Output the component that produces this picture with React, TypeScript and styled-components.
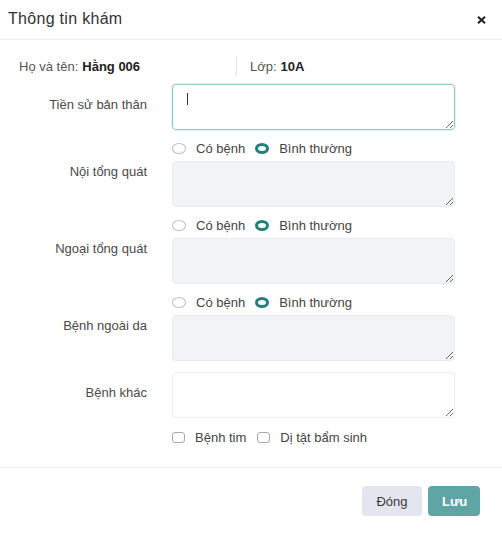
import React from "react";
import styled, { createGlobalStyle } from "styled-components";

const Global = createGlobalStyle`
  html, body { margin: 0; padding: 0; background: #fff; }
  body { font-family: "Liberation Sans", Arial, sans-serif; color: #333; }
  * { box-sizing: border-box; }
`;

const Modal = styled.div`
  width: 502px;
  height: 535px;
  background: #fff;
  display: flex;
  flex-direction: column;
`;

const Header = styled.div`
  height: 40px;
  padding: 0 16px 2px 8px;
  display: flex;
  align-items: center;
  justify-content: space-between;
  border-bottom: 1px solid #ececec;
`;

const Title = styled.div`
  font-size: 16px;
  letter-spacing: 0.3px;
  color: #333;
`;

const CloseBtn = styled.button`
  border: 0;
  background: transparent;
  padding: 0;
  margin-top: 2px;
  width: 10px;
  height: 10px;
  display: flex;
  align-items: center;
  justify-content: center;
`;

const Body = styled.div`
  padding: 16px 0 23px 0;
  display: flex;
  flex-direction: column;
  border-bottom: 1px solid #ececec;
`;

const InfoRow = styled.div`
  display: flex;
  align-items: center;
  padding-left: 19px;
  height: 20px;
  margin-bottom: 8px;
  font-size: 13px;
  color: #555;
`;

const InfoItem = styled.div<{ $divider?: boolean }>`
  display: flex;
  align-items: center;
  height: 20px;
  ${(p) =>
    p.$divider
      ? `border-left: 1px solid #e6e6e6; padding-left: 13px;`
      : `width: 217px;`}
  b {
    color: #222;
    font-weight: 700;
    margin-left: 4px;
  }
`;

const Form = styled.div`
  display: flex;
  flex-direction: column;
  gap: 11px;
`;

const Row = styled.div`
  display: grid;
  grid-template-columns: 147px 283px;
  column-gap: 25px;
  align-items: center;
`;

const Label = styled.div`
  text-align: right;
  font-size: 13px;
  color: #4a4a4a;
  margin-bottom: 6px;
`;

const Control = styled.div`
  display: flex;
  flex-direction: column;
  gap: 6px;
`;

const FieldWrap = styled.div`
  position: relative;
  height: 46px;
`;

const TextArea = styled.textarea<{ $active?: boolean }>`
  display: block;
  width: 283px;
  height: 46px;
  resize: vertical;
  border-radius: 4px;
  font-family: "Liberation Sans", Arial, sans-serif;
  font-size: 13px;
  padding: 8px 14px;
  outline: none;
  caret-color: transparent;
  ${(p) =>
    p.$active
      ? `border: 1px solid #93cbc9; background: #fff; box-shadow: 0 0 0 1px rgba(147,203,201,0.25);`
      : `border: 1px solid #e9ecf0; background: #fff;`}
  &:disabled {
    background: #f1f3f6;
    border-color: #e8ebef;
  }
`;

const Caret = styled.span`
  position: absolute;
  left: 15px;
  top: 9px;
  width: 1px;
  height: 12px;
  background: #333;
`;

const OptionRow = styled.div`
  display: flex;
  align-items: center;
  height: 14px;
  font-size: 13px;
  color: #444;
`;

const Option = styled.label`
  display: flex;
  align-items: center;
  margin-right: 10px;
  white-space: nowrap;
`;

const RadioMark = styled.span<{ $checked?: boolean }>`
  display: inline-block;
  width: 14px;
  height: 11px;
  border-radius: 50%;
  margin-right: 10px;
  ${(p) =>
    p.$checked
      ? `border: 3.5px solid #23807d; background: #fff;`
      : `border: 1px solid #bdbdbd; background: #fff;`}
`;

const CheckMark = styled.span`
  display: inline-block;
  width: 13px;
  height: 11px;
  border-radius: 3px;
  border: 1px solid #a9a9a9;
  background: #fff;
  margin-right: 10px;
`;

const CheckRow = styled(OptionRow)`
  margin-top: 1px;
  & > label {
    margin-right: 11px;
  }
`;

const Footer = styled.div`
  display: flex;
  justify-content: flex-end;
  gap: 6px;
  padding: 18px 22px 18px 0;
`;

const Button = styled.button<{ $primary?: boolean }>`
  height: 30px;
  border: 0;
  border-radius: 4px;
  font-family: "Liberation Sans", Arial, sans-serif;
  font-size: 13px;
  padding: 0 14px;
  ${(p) =>
    p.$primary
      ? `background: #60a5a6; color: #fff; font-weight: 700; width: 52px;`
      : `background: #e3e6ee; color: #3a3a3a; width: 60px;`}
`;

function RadioPair() {
  return (
    <OptionRow>
      <Option>
        <RadioMark />
        Có bệnh
      </Option>
      <Option>
        <RadioMark $checked />
        Bình thường
      </Option>
    </OptionRow>
  );
}

const sections = ["Nội tổng quát", "Ngoại tổng quát", "Bệnh ngoài da"];

export default function App() {
  return (
    <>
      <Global />
      <Modal>
        <Header>
          <Title>Thông tin khám</Title>
          <CloseBtn aria-label="close">
            <svg width="9" height="8" viewBox="0 0 9 8">
              <path d="M1 0.8 L8 7.2 M8 0.8 L1 7.2" stroke="#222" strokeWidth="2.1" />
            </svg>
          </CloseBtn>
        </Header>
        <Body>
          <InfoRow>
            <InfoItem>
              Họ và tên:<b>Hằng 006</b>
            </InfoItem>
            <InfoItem $divider>
              Lớp:<b>10A</b>
            </InfoItem>
          </InfoRow>
          <Form>
            <Row>
              <Label>Tiền sử bản thân</Label>
              <Control>
                <FieldWrap>
                  <TextArea $active />
                  <Caret />
                </FieldWrap>
              </Control>
            </Row>
            {sections.map((s) => (
              <Row key={s}>
                <Label>{s}</Label>
                <Control>
                  <RadioPair />
                  <FieldWrap>
                    <TextArea disabled />
                  </FieldWrap>
                </Control>
              </Row>
            ))}
            <Row>
              <Label>Bệnh khác</Label>
              <Control>
                <FieldWrap>
                  <TextArea />
                </FieldWrap>
              </Control>
            </Row>
            <Row>
              <span />
              <CheckRow>
                <Option>
                  <CheckMark />
                  Bệnh tim
                </Option>
                <Option>
                  <CheckMark />
                  Dị tật bẩm sinh
                </Option>
              </CheckRow>
            </Row>
          </Form>
        </Body>
        <Footer>
          <Button>Đóng</Button>
          <Button $primary>Lưu</Button>
        </Footer>
      </Modal>
    </>
  );
}
